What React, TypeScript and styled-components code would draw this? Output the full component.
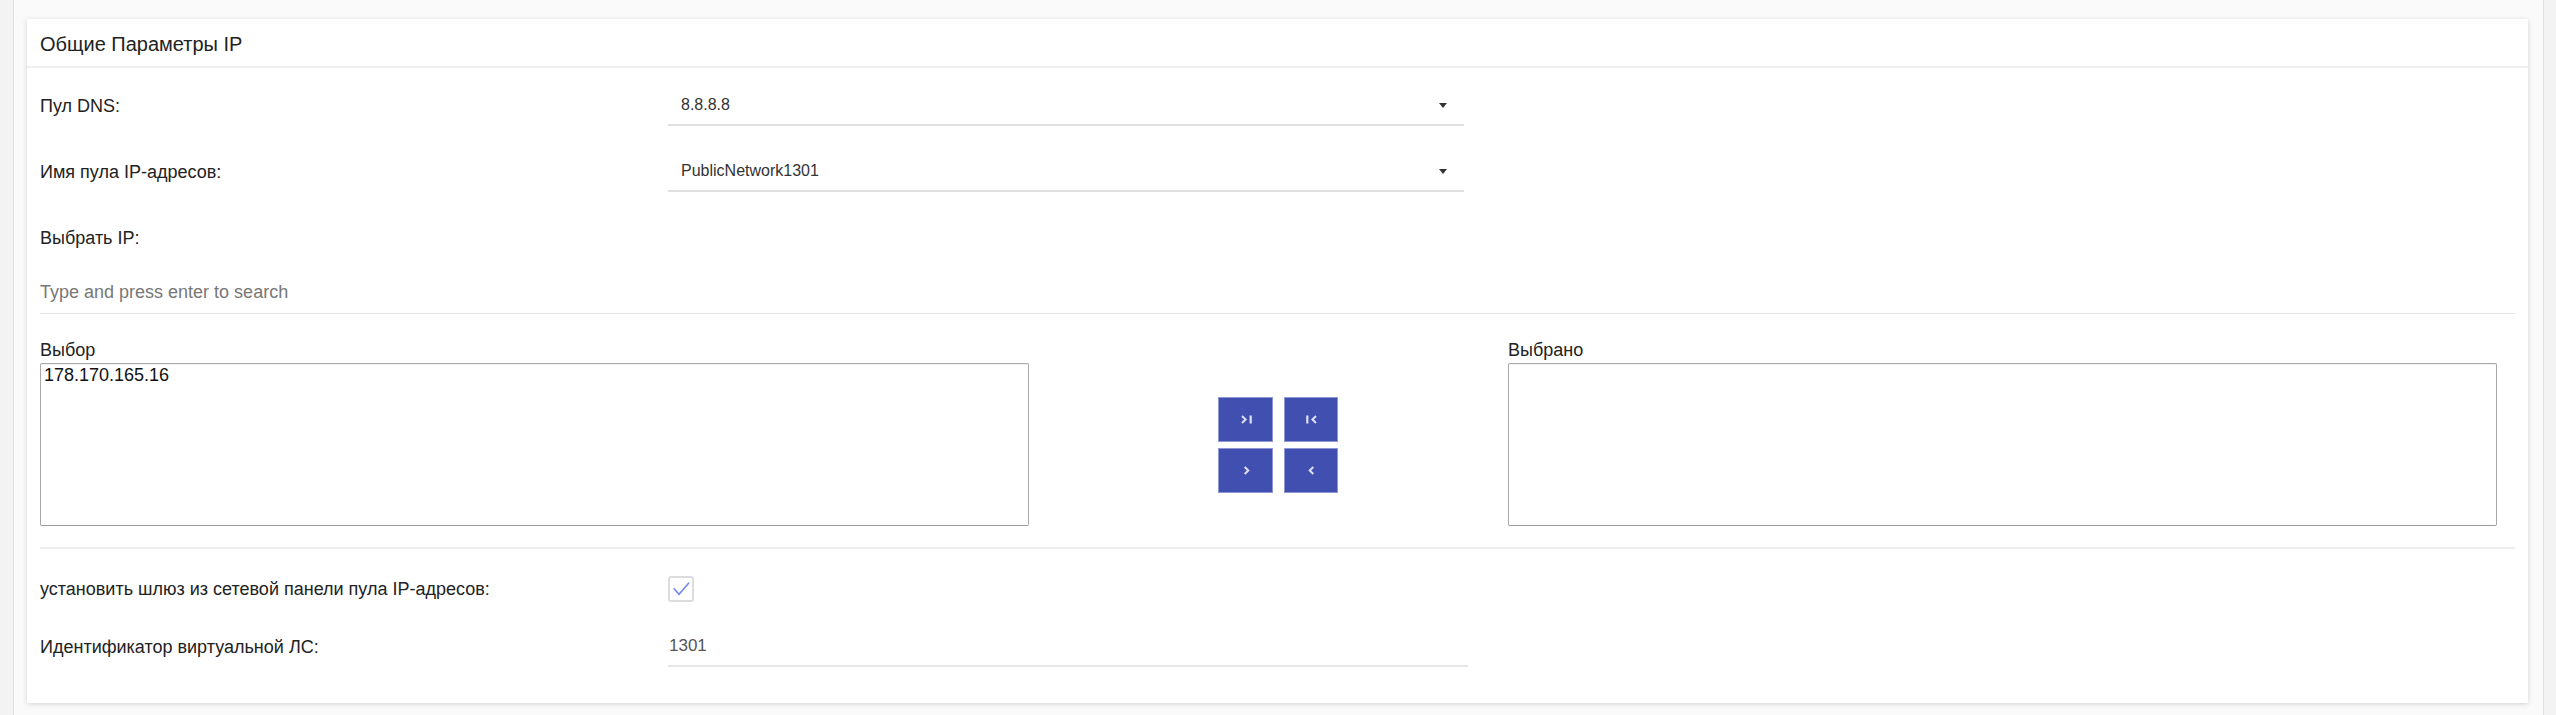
import React, { FC } from "react";
import styled, { createGlobalStyle } from "styled-components";

const GlobalStyle = createGlobalStyle`
  html, body {
    margin: 0;
    padding: 0;
  }
  body {
    background: #f3f3f3;
    font-family: "Liberation Sans", Arial, sans-serif;
    color: #222;
  }
`;

type IconProps = { kind: "last" | "first" | "next" | "prev" };

// стрелки перемещения между списками
const TransferIcon: FC<IconProps> = ({ kind }) => (
  <svg width="11" height="9" viewBox="0 0 11 9" fill="none">
    {kind === "last" && (
      <>
        <polyline points="1,1 4.6,4.5 1,8" stroke="currentColor" strokeWidth="2" />
        <rect x="8.6" y="0.5" width="2.2" height="8" fill="currentColor" />
      </>
    )}
    {kind === "first" && (
      <>
        <rect x="0.2" y="0.5" width="2.2" height="8" fill="currentColor" />
        <polyline points="10,1 6.4,4.5 10,8" stroke="currentColor" strokeWidth="2" />
      </>
    )}
    {kind === "next" && (
      <polyline points="3.7,1 7.3,4.5 3.7,8" stroke="currentColor" strokeWidth="2" />
    )}
    {kind === "prev" && (
      <polyline points="7.3,1 3.7,4.5 7.3,8" stroke="currentColor" strokeWidth="2" />
    )}
  </svg>
);

const App: FC = () => {
  return (
    <>
      <GlobalStyle />
      <SFrame>
        <SCard>
          <SCardHeader>
            <STitle>Общие Параметры IP</STitle>
          </SCardHeader>
          <SCardBody>
            <SFieldRow $gap={0}>
              <SLabel>Пул DNS:</SLabel>
              <SSelect>
                <span>8.8.8.8</span>
                <SCaret />
              </SSelect>
            </SFieldRow>
            <SFieldRow $gap={26}>
              <SLabel>Имя пула IP-адресов:</SLabel>
              <SSelect>
                <span>PublicNetwork1301</span>
                <SCaret />
              </SSelect>
            </SFieldRow>
            <SFieldRow $gap={26}>
              <SLabel>Выбрать IP:</SLabel>
            </SFieldRow>

            <SSearch>Type and press enter to search</SSearch>

            <SDualList>
              <SListColumn>
                <SListTitle>Выбор</SListTitle>
                <SListBox>
                  <SOption>178.170.165.16</SOption>
                </SListBox>
              </SListColumn>
              <STransferArea>
                <STransferGrid>
                  <STransferButton>
                    <TransferIcon kind="last" />
                  </STransferButton>
                  <STransferButton>
                    <TransferIcon kind="first" />
                  </STransferButton>
                  <STransferButton>
                    <TransferIcon kind="next" />
                  </STransferButton>
                  <STransferButton>
                    <TransferIcon kind="prev" />
                  </STransferButton>
                </STransferGrid>
              </STransferArea>
              <SListColumn>
                <SListTitle>Выбрано</SListTitle>
                <SListBox />
              </SListColumn>
            </SDualList>

            <SDivider />

            <SFieldRow $gap={20}>
              <SLabel>установить шлюз из сетевой панели пула IP-адресов:</SLabel>
              <SCheckbox>
                <svg width="22" height="22" viewBox="0 0 22 22" fill="none">
                  <polyline
                    points="3.7,10.3 9,16.3 19,4.7"
                    stroke="#7084f0"
                    strokeWidth="1.5"
                  />
                </svg>
              </SCheckbox>
            </SFieldRow>
            <SFieldRow $gap={18}>
              <SLabel>Идентификатор виртуальной ЛС:</SLabel>
              <SValueField>1301</SValueField>
            </SFieldRow>
          </SCardBody>
        </SCard>
      </SFrame>
    </>
  );
};

// Style
const SFrame = styled.div`
  box-sizing: border-box;
  min-height: 715px;
  margin: 0 12px 0 13px;
  padding: 19px 15px 0 13px;
  border-left: 1px solid #e0e0e0;
  border-right: 1px solid #e0e0e0;
  background: #fafafa;
`;

const SCard = styled.section`
  background: #fff;
  box-shadow: 0 1px 5px rgba(0, 0, 0, 0.16);
`;

const SCardHeader = styled.header`
  display: flex;
  align-items: center;
  height: 43px;
  padding: 4px 13px 0;
  border-bottom: 2px solid #efefef;
`;

const STitle = styled.h2`
  margin: 0;
  font-size: 20px;
  font-weight: 400;
  color: #222;
`;

const SCardBody = styled.div`
  padding: 18px 13px 36px;
`;

const SFieldRow = styled.div<{ $gap: number }>`
  display: grid;
  grid-template-columns: 628px 800px;
  align-items: center;
  height: 40px;
  margin-top: ${(p) => p.$gap}px;
`;

const SLabel = styled.label`
  font-size: 18px;
  color: #222;
`;

const SSelect = styled.div`
  box-sizing: border-box;
  display: flex;
  align-items: center;
  justify-content: space-between;
  width: 796px;
  height: 40px;
  padding: 0 17px 0 13px;
  border-bottom: 2px solid #e0e0e0;
  font-size: 16px;
  color: #333;
`;

const SCaret = styled.span`
  width: 0;
  height: 0;
  border-top: 5px solid #333;
  border-left: 4px solid transparent;
  border-right: 4px solid transparent;
`;

const SSearch = styled.div`
  box-sizing: border-box;
  display: flex;
  align-items: center;
  height: 40px;
  margin-top: 16px;
  padding-bottom: 3px;
  border-bottom: 1px solid #e6e6e6;
  font-size: 18px;
  color: #777;
`;

const SDualList = styled.div`
  display: grid;
  grid-template-columns: 989px 479px 989px;
  margin-top: 26px;
`;

const SListColumn = styled.div`
  display: flex;
  flex-direction: column;
`;

const SListTitle = styled.div`
  height: 20px;
  margin-bottom: 3px;
  font-size: 18px;
  line-height: 20px;
  color: #222;
`;

const SListBox = styled.div`
  box-sizing: border-box;
  height: 163px;
  padding: 1px 3px;
  border: 1px solid #a8a8a8;
  border-bottom-color: #9a9a9a;
  border-radius: 2px;
  box-shadow: inset 0 1px 1px rgba(0, 0, 0, 0.06);
  background: #fff;
`;

const SOption = styled.div`
  font-size: 18px;
  line-height: 21px;
  color: #111;
`;

const STransferArea = styled.div`
  display: flex;
  align-items: center;
  justify-content: center;
  align-self: end;
  height: 163px;
  padding-left: 19px;
`;

const STransferGrid = styled.div`
  display: grid;
  grid-template-columns: 55px 54px;
  grid-auto-rows: 45px;
  column-gap: 11px;
  row-gap: 6px;
`;

const STransferButton = styled.button`
  display: flex;
  align-items: center;
  justify-content: center;
  padding: 0 0 0 1px;
  border: 1px solid #8d97d4;
  background: #4150b0;
  color: #dde0f5;
  cursor: pointer;
`;

const SDivider = styled.hr`
  height: 2px;
  margin: 21px 0 0;
  border: 0;
  background: #ededed;
`;

const SCheckbox = styled.span`
  box-sizing: border-box;
  display: flex;
  align-items: center;
  justify-content: center;
  width: 26px;
  height: 26px;
  border: 2px solid #dcdcdc;
  border-radius: 3px;
  background: #fff;
`;

const SValueField = styled.div`
  box-sizing: border-box;
  display: flex;
  align-items: center;
  height: 40px;
  padding-left: 1px;
  border-bottom: 2px solid #e6e6e6;
  font-size: 17px;
  color: #555;
`;

export default App;
